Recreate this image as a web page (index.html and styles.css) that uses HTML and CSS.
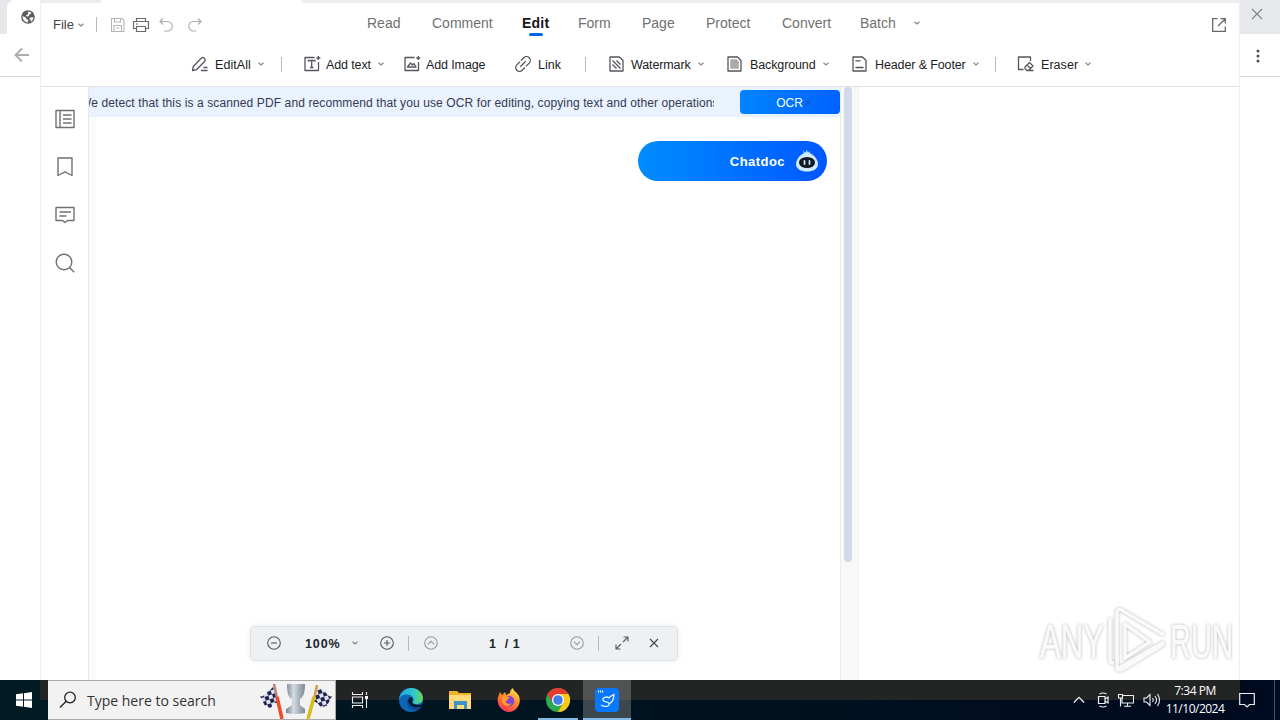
FILE: index.html
```
<!DOCTYPE html>
<html lang="en">
<head>
  <meta charset="UTF-8" />
  <title>PDF Editor</title>
  <link rel="stylesheet" href="styles.css">
</head>
<body>

  <!-- shared symbols -->
  <svg class="defs">
    <symbol id="chev" viewBox="0 0 8 8"><path d="M1.500 2.800 4 5l2.500-2.200" /></symbol>
  </svg>

  <div class="screen">
    <!-- browser window behind, left edge -->
    <div class="behind left">
      <div class="tab-strip">
        <div class="tab">
          <svg width="14" height="14" viewBox="0 0 14 14"><circle cx="7" cy="7" r="6.800" fill="#5b5c5f" /><path d="M1.500 6l3 1.200 1 1.800 1.800.8-.4 2.600C4 12.500 1.300 9.800 1.500 6zM7 1.600l3 .6.2 1.600-2 .6-.4 1.800-2.200.4-.6-1.400 2-1zM9 7.500l3.400-.3c0 2-1 3.700-2.500 4.500L9.500 9.500 8.400 9z" fill="#f4f4f5" /></svg>
        </div>
      </div>
      <div class="nav">
        <svg width="16" height="16" viewBox="0 0 16 16" class="ln"><path d="M15 8H2M8 1.500 1.500 8 8 14.500" stroke="#adadad" stroke-width="1.900" /></svg>
      </div>
    </div>

    <div class="app">
      <div class="top-edge"></div>

      <div class="menu">
        <span class="file">File</span>
        <svg class="chev"><use href="#chev" /></svg>
        <i class="sep"></i>
        <div class="quick">
          <svg width="16" height="16" viewBox="0 0 16 16" class="ln" stroke="#b5b5b5"><path d="M1.500 1.500h10.500l2 2v11h-12.500zM4.500 1.500v3.500h6V1.500M4 14.500V8.500h7.500v6M6 11h3.500" /></svg>
          <svg width="18" height="16" viewBox="0 0 18 16" class="ln" stroke="#6a6b70"><path d="M4.500 4.500v-3h9v3M4.500 11.500h-3v-7h15v7h-3M4.500 9.500h9v5h-9zM4 7h2" stroke-width="1.200" /></svg>
          <svg width="16" height="16" viewBox="0 0 16 16" class="ln" stroke="#aaa"><path d="M5 1.500 2 4.500l3 3M2 4.500h7.500a4.700 4.700 0 0 1 0 9.500H6" /></svg>
          <svg width="16" height="16" viewBox="0 0 16 16" class="ln" stroke="#aaa"><path d="M11 1.500l3 3-3 3M14 4.500H6.500a4.700 4.700 0 0 0 0 9.500H9" /></svg>
        </div>
        <div class="menu-tabs">
          <span>Read</span>
          <span>Comment</span>
          <span class="active">Edit</span>
          <span>Form</span>
          <span>Page</span>
          <span>Protect</span>
          <span>Convert</span>
          <span>Batch</span>
          <svg class="chev"><use href="#chev" /></svg>
        </div>
        <svg width="14" height="14" viewBox="0 0 14 14" class="ln share" stroke="#66676b"><path d="M5.500 .7H.7v12.600h12.600V8.500M8.500 .7h4.800v4.800M13 1 6 8" stroke-width="1.300" /></svg>
      </div>

      <div class="ribbon">
        <div class="tool">
          <svg class="ic" viewBox="0 0 18 18"><path d="M1.500 15.500l.8-4L10.500 3a1.800 1.800 0 0 1 2.600 0l.6.7a1.800 1.800 0 0 1 0 2.500L5.500 14.700zM10 15.500h6.500M12.500 12.500h4" /></svg>
          <span class="label">EditAll</span><svg class="chev"><use href="#chev" /></svg>
        </div>
        <i class="sep"></i>
        <div class="tool">
          <svg class="ic" viewBox="0 0 18 18"><path d="M11.500 2.500H2v13h13.500V7M5.500 6.700V5.500h6.500v1.200M8.700 5.500v7M7 12.500h3.500M15.300 1v4M13.300 3h4" /></svg>
          <span class="label">Add text</span><svg class="chev"><use href="#chev" /></svg>
        </div>
        <div class="tool">
          <svg class="ic" viewBox="0 0 18 18"><path d="M11.500 2.500H2v13h13.500V7M4.500 12l3-4 2 2 1.500-1.500 2 3.500zM15.300 1v4M13.300 3h4" /></svg>
          <span class="label">Add Image</span>
        </div>
        <div class="tool link">
          <svg class="ic" viewBox="0 0 18 18"><path d="M7 5.500l2.800-2.800a3.800 3.800 0 0 1 5.400 5.400L12 11.200M11 12.500l-2.800 2.800a3.800 3.800 0 0 1-5.400-5.400L6 6.800M6.300 11.700l5.400-5.400" /></svg>
          <span class="label">Link</span>
        </div>
        <i class="sep"></i>
        <div class="tool">
          <svg class="ic" viewBox="0 0 18 18"><path d="M2 2h9.500L15 5.500V16H2zM4.500 5.500l8 8M4.500 9.500l4 4M8.500 5.500l4 4" /></svg>
          <span class="label">Watermark</span><svg class="chev"><use href="#chev" /></svg>
        </div>
        <div class="tool page-bg">
          <svg class="ic" viewBox="0 0 18 18"><path d="M2 2h9.500L15 5.500V16H2z" /><path d="M4.300 4.300h6.300l2.200 2.200v7.300H4.300z" fill="#aaa" stroke="none" /></svg>
          <span class="label">Background</span><svg class="chev"><use href="#chev" /></svg>
        </div>
        <div class="tool page-bg">
          <svg class="ic" viewBox="0 0 18 18"><path d="M2 2h9.500L15 5.500V16H2zM4.500 5.800h5M4.500 12.500h8" /></svg>
          <span class="label">Header &amp; Footer</span><svg class="chev"><use href="#chev" /></svg>
        </div>
        <i class="sep"></i>
        <div class="tool">
          <svg class="ic" viewBox="0 0 18 18"><path d="M6.500 14.500H1.500V2h12v4M8 12l4.500-4.500 3.500 3.500-4.500 4.500H10l-2-2zM10 10l3.500 3.500M12 15.500h4.500" /></svg>
          <span class="label eraser">Eraser</span><svg class="chev"><use href="#chev" /></svg>
        </div>
      </div>

      <div class="work">
        <div class="side">
          <svg width="20" height="20" viewBox="0 0 20 20" class="ln"><path d="M1 1.500h18v17H1zM5 1.500v17M8 6h8.500M8 10h8.500M8 14h8.500" /></svg>
          <svg width="20" height="20" viewBox="0 0 20 20" class="ln"><path d="M3 1h14v17.500l-7-3.700-7 3.700z" /></svg>
          <svg width="20" height="20" viewBox="0 0 20 20" class="ln"><path d="M1 2.500h18v13h-6.500L10 17.500l-2.500-2H1zM4.500 7h11.500M4.500 11h7" /></svg>
          <svg width="20" height="20" viewBox="0 0 20 20" class="ln"><circle cx="9" cy="9" r="7.800" /><path d="M14.500 14.500l4.700 4.700" /></svg>
        </div>

        <div class="doc">
          <div class="banner">
            <p>We detect that this is a scanned PDF and recommend that you use OCR for editing, copying text and other operations</p>
            <button class="ocr">OCR<span>×</span></button>
          </div>
          <div class="paper">
            <button class="chatdoc">
              Chatdoc
              <svg width="24" height="24" viewBox="0 0 24 24"><path d="M9 5 8 1.500l2.500 2L12 .5l1 3 2-1.500-.5 3.500z" fill="#8dccff" /><path d="M12 3.500c5 0 11 6 11 11.500 0 5-5 7.500-11 7.500S1 20 1 15C1 9.500 7 3.500 12 3.500z" fill="#cfe9ff" /><ellipse cx="12" cy="13.500" rx="8" ry="5.500" fill="#15191f" /><path d="M9.500 12v3M14.500 12v3" stroke="#bfe6ff" stroke-width="1.800" stroke-linecap="round" /></svg>
            </button>
          </div>
        </div>

        <div class="scroll"><div class="thumb"></div></div>
        <div class="panel"></div>

        <!-- zoom / page bar floats over the document -->
        <div class="float-bar">
          <svg width="14" height="14" viewBox="0 0 14 14" class="ln"><circle cx="7" cy="7" r="6.300" /><path d="M4 7h6" /></svg>
          <strong class="zoom">100%</strong>
          <svg class="chev"><use href="#chev" /></svg>
          <svg width="14" height="14" viewBox="0 0 14 14" class="ln"><circle cx="7" cy="7" r="6.300" /><path d="M4 7h6M7 4v6" /></svg>
          <i class="sep"></i>
          <svg width="14" height="14" viewBox="0 0 14 14" class="ln dim"><circle cx="7" cy="7" r="6.300" /><path d="M4 8.300l3-3 3 3" /></svg>
          <strong class="page-no">1&nbsp; / 1</strong>
          <svg width="14" height="14" viewBox="0 0 14 14" class="ln dim"><circle cx="7" cy="7" r="6.300" /><path d="M4 5.700l3 3 3-3" /></svg>
          <i class="sep"></i>
          <svg width="14" height="14" viewBox="0 0 14 14" class="ln"><path d="M8.500 1H13v4.500M13 1 8 6M1 8.500V13h4.500M1 13l5-5" /></svg>
          <svg width="10" height="10" viewBox="0 0 10 10" class="ln"><path d="M1 1l8 8M9 1 1 9" stroke="#444" /></svg>
        </div>
      </div>
    </div>

    <!-- browser window behind, right edge -->
    <div class="behind right">
      <div class="tab-strip">
        <svg width="12" height="12" viewBox="0 0 12 12" class="ln"><path d="M1 1l10 10M11 1 1 11" stroke="#7f8285" /></svg>
      </div>
      <div class="nav">
        <svg width="4" height="14" viewBox="0 0 4 14"><g fill="#4c4d50"><circle cx="2" cy="2" r="1.500" /><circle cx="2" cy="7" r="1.500" /><circle cx="2" cy="12" r="1.500" /></g></svg>
      </div>
    </div>

    <div class="mark">
      <svg width="204" height="72" viewBox="0 0 204 72">
        <text x="6" y="54" textLength="64" lengthAdjust="spacingAndGlyphs">ANY</text>
        <g class="play"><path d="M83 7v58l47-27" /><path d="M76 14v42q0 3 4 3M91 20v34l25-16zM83 7q2-3 6 0l41 24M83 65q2 2 6 0l41-25" /></g>
        <text x="136" y="54" textLength="63" lengthAdjust="spacingAndGlyphs">RUN</text>
      </svg>
    </div>
  </div>

  <div class="taskbar">
    <div class="start">
      <svg width="16" height="16" viewBox="0 0 16 16"><path d="M0 2.300 7 1.300v6.200H0zM8 1.200 16 0v7.500H8zM0 8.500h7v6.200l-7-1zM8 8.500h8V16l-8-1.200z" fill="#fff" /></svg>
    </div>
    <div class="search">
      <svg width="18" height="18" viewBox="0 0 18 18" class="ln"><circle cx="11" cy="6.500" r="5.300" stroke="#222" stroke-width="1.300" /><path d="M7.200 10.300 1 16.500" stroke="#222" stroke-width="1.400" /></svg>
      <span>Type here to search</span>
      <svg class="trophy" width="74" height="37" viewBox="0 0 74 37">
        <defs>
          <linearGradient id="cup"><stop offset="0" stop-color="#778593" /><stop offset=".4" stop-color="#d5dce2" /><stop offset="1" stop-color="#7a8794" /></linearGradient>
          <pattern id="check" width="8" height="8" patternUnits="userSpaceOnUse" patternTransform="rotate(-20)"><path d="M0 0h8v8H0z" fill="#dfe2f0" /><path d="M0 0h4v4H0zM4 4h4v4H4z" fill="#20244f" /></pattern>
        </defs>
        <path d="M1 14c4 2 5-4 9-5l4-4 6 16c-4-1-6 1-8 5-4 0-3-3-6-2z" fill="url(#check)" />
        <path d="M73 14c-4 2-5-4-9-5l-4-4-7 15c4-1 7 2 9 6 4 0 3-3 6-2z" fill="url(#check)" />
        <path d="M15 2l3 14" stroke="#b98279" stroke-width="2.500" />
        <path d="M18 15l5 22" stroke="#f04b24" stroke-width="3.500" />
        <path d="M58 3l-3 14" stroke="#d79b43" stroke-width="2.500" />
        <path d="M55 15l-6 22" stroke="#d3be17" stroke-width="3.500" />
        <path d="M28 2h18c0 10-2 13-5 15v6l5 4v4q-9 2-19 0v-4l6-4v-6c-3-1-5-5-5-15z" fill="url(#cup)" />
      </svg>
    </div>

    <div class="pinned">
      <div class="pin">
        <svg width="18" height="16" viewBox="0 0 18 16" class="ln" stroke="#eee"><path d="M1.500 0v2.500h10V0M1.500 16v-2.500h10V16M1.500 5h10v6h-10zM15.500 0v3M15.500 7v9" /><path d="M14 4h3v3h-3z" fill="#fff" stroke="none" /></svg>
      </div>
      <div class="pin">
        <svg width="26" height="26" viewBox="0 0 26 26">
          <defs><linearGradient id="edge" x1="0" x2="1"><stop offset="0" stop-color="#1e9fe6" /><stop offset=".6" stop-color="#31c7d0" /><stop offset="1" stop-color="#66d850" /></linearGradient></defs>
          <circle cx="13" cy="13" r="12" fill="#0d66b5" />
          <path d="M1 12C2 5 7 1 13 1c7 0 12 5 12 10 0 4-3 6-7 6-3 0-4-1-3-2 3-5-4-9-9-7-3 1-4 2-5 4z" fill="url(#edge)" />
          <path d="M10 12c-3 5 1 12 8 11 3-.5 5-2 6-4-5 3-12 1-11-5l1-3z" fill="#0a4b94" />
          <path d="M14 15c1-2 1-4-1-5-3 1-3 4-2 6 2 4 8 6 13 3l1-2c-5 2-10 1-11-2z" fill="#06172c" />
        </svg>
      </div>
      <div class="pin">
        <svg width="22" height="20" viewBox="0 0 22 20"><path d="M0 1h8l2 2h12v16H0z" fill="#f0b429" /><path d="M0 5h22v14H0z" fill="#ffdc79" /><path d="M5 11h13v8h-3v-4H8v4H5z" fill="#3d93cb" /></svg>
      </div>
      <div class="pin">
        <svg width="24" height="24" viewBox="0 0 24 24">
          <defs><linearGradient id="fox" x1=".7" y1="0" x2=".2" y2="1"><stop offset="0" stop-color="#ffe14a" /><stop offset=".5" stop-color="#ff7c2b" /><stop offset="1" stop-color="#f42a62" /></linearGradient></defs>
          <path d="M3 4l2 3 3-3 1 3 4-2c0-2 1-4 3-5 0 3 4 4 6 8 3 8-3 16-10 16S-1 17 1 9z" fill="url(#fox)" />
          <circle cx="12" cy="13" r="5.300" fill="#8442d8" />
          <path d="M5 9c3-1 6-1 8 1-3 0-2 3-4 3-1 2 3 4 6 2-2 4-8 4-10-1z" fill="#ff9a22" />
        </svg>
      </div>
      <div class="pin running">
        <svg width="24" height="24" viewBox="0 0 24 24"><circle cx="12" cy="12" r="12" fill="#2da94f" /><path d="M1.600 6A12 12 0 0 1 22.400 6H12l-5.200 9z" fill="#e63b2e" /><path d="M22.400 6A12 12 0 0 1 12 24l5.200-9L12 6z" fill="#fdc816" /><circle cx="12" cy="12" r="6" fill="#fff" /><circle cx="12" cy="12" r="4.800" fill="#3f7ee8" /></svg>
      </div>
      <div class="pin current">
        <svg width="24" height="24" viewBox="0 0 24 24" class="ln"><rect width="24" height="24" rx="4" fill="#0878ff" /><path d="M6 17c4 2.500 9 1.500 8-1.500-.8-2-5-1-6-3.500-.8-2.500 4-4 6-2 1-2 3-2.500 5-3.500 0 5-1.500 7.500-5 9.500" stroke="#e5f3ff" stroke-width="1.300" /><path d="M3.500 2.500v2M5.500 2.500v2M7.500 2.500v2" stroke="#fff" /></svg>
      </div>
    </div>

    <div class="tray">
      <svg width="12" height="8" viewBox="0 0 12 8" class="ln"><path d="M.8 6.500 6 1.300l5.200 5.200" stroke-width="1.300" /></svg>
      <svg width="12" height="16" viewBox="0 0 12 16" class="ln"><path d="M1.500 4.500h6.500v7H1.500zM8 7l3-2v6L8 9M2.500 2q3.500-2 7 0M2.500 14q3.500 2 7 0" stroke-width="1.200" /></svg>
      <svg width="16" height="14" viewBox="0 0 16 14" class="ln"><path d="M5 2.500h10.500v7.500H4V5M.5 1.500h4v3.500h-4zM2.500 5v8.500M9.500 10v3M6 13.300h7" /></svg>
      <svg width="18" height="14" viewBox="0 0 18 14" class="ln"><path d="M1 5v4h2.500L7 12.500v-11L3.500 5zM9.500 5q1.500 2 0 4M12 3q3 4 0 8M14.500 1q4 6 0 12" /></svg>
      <div class="clock"><span>7:34 PM</span><span>11/10/2024</span></div>
      <svg width="16" height="16" viewBox="0 0 16 16" class="ln notes"><path d="M.7 1.500h14.600v11H10.500L8 15l-2.500-2.500H.7z" stroke-width="1.200" /></svg>
      <i class="peek"></i>
    </div>
  </div>

</body>
</html>
```
FILE: styles.css
```
* {
  box-sizing: border-box;
}

body {
  margin: 0;
  width: 1280px;
  height: 720px;
  overflow: hidden;
  font-family: "Liberation Sans", Arial, sans-serif;
  background: #fff;
}

svg {
  display: block;
  flex: none;
}

.defs {
  position: absolute;
  width: 0;
  height: 0;
}

.ln {
  fill: none;
  stroke-width: 1.1;
}

button {
  border: none;
  padding: 0;
  font-family: inherit;
  color: #fff;
}

.screen {
  position: relative;
  display: grid;
  grid-template-columns: 40px 1200px 40px;
  height: 680px;
}

/* browser behind the app */
.behind .tab-strip {
  height: 34px;
  background: #e6e8eb;
}

.behind .nav {
  height: 43px;
  border-bottom: 1px solid #d5d7d9;
}

.left .tab-strip {
  padding-left: 7px;
}

.left .tab {
  height: 34px;
  padding: 10px 0 0 14px;
  background: #fff;
  border-radius: 8px 0 0 0;
}

.left .nav {
  padding: 13px 0 0 14px;
}

.right .tab-strip {
  padding: 8px 0 0 11px;
}

.right .nav {
  padding: 15px 0 0 16px;
}

/* app window */
.app {
  display: flex;
  flex-direction: column;
  background: #fff;
  border-left: 1px solid #eee;
  border-right: 1px solid #eee;
}

.top-edge {
  height: 3px;
  background: linear-gradient(#fff, #fff) 60px 0 / 201px 3px no-repeat #ededee;
}

.menu {
  display: flex;
  align-items: center;
  height: 43px;
  padding-left: 12px;
  color: #444;
}

.file {
  width: 24px;
  font-size: 13px;
}

.chev {
  width: 8px;
  height: 8px;
  fill: none;
  stroke: #888;
  stroke-width: 1.2;
}

.sep {
  flex: none;
  width: 1px;
  height: 15px;
  background: #b9b9b9;
}

.menu .sep {
  margin: 0 13px 0 11px;
}

.quick {
  display: flex;
  align-items: center;
  width: 257px;
  gap: 8px;
}

.quick svg:nth-child(2) {
  margin-left: -2px;
}

.quick svg:nth-child(4) {
  margin-left: 5px;
}

.menu-tabs {
  display: grid;
  grid-template-columns: 65px 90px 56px 64px 64px 76px 78px 53px 8px;
  align-items: center;
  height: 40px;
  padding-bottom: 3px;
  font-size: 14px;
  color: #707070;
}

.active {
  position: relative;
  width: 28px;
  font-weight: bold;
  letter-spacing: .2px;
  color: #17181c;
}

.active::after {
  content: "";
  position: absolute;
  left: 7px;
  bottom: -5px;
  width: 14px;
  height: 3px;
  border-radius: 2px;
  background: #0066f0;
}

.share {
  margin: 0 13px 0 auto;
}

.ribbon {
  display: grid;
  grid-template-columns: 90px 22px 100px 111px 71px 23px 118px 125px 144px 22px 80px;
  align-items: center;
  height: 41px;
  padding: 0 0 4px 150px;
  border-bottom: 1px solid #dfe1e4;
}

.tool {
  display: flex;
  align-items: center;
  font-size: 12.5px;
  letter-spacing: -.12px;
  color: #1c1d24;
  white-space: nowrap;
}

.label {
  padding-top: 1px;
}

.tool:first-child,
.link,
.eraser {
  letter-spacing: .05px;
}

.tool:first-child .ic,
.link .ic,
.page-bg .ic {
  margin-right: 6px;
}

.eraser {
  margin-left: 1px;
}

.ic {
  width: 18px;
  height: 18px;
  margin-right: 5px;
  fill: none;
  stroke: #55565b;
  stroke-width: 1.3;
  stroke-linejoin: round;
}

.tool .chev {
  margin-left: 6px;
}

/* work area */
.work {
  position: relative;
  flex: 1;
  display: flex;
}

.side {
  display: flex;
  flex-direction: column;
  align-items: center;
  gap: 28px;
  width: 48px;
  padding-top: 22px;
  border-right: 1px solid #e6e7e9;
}

.side svg {
  stroke: #707175;
  stroke-width: 1.4;
  stroke-linejoin: round;
}

.doc {
  display: flex;
  flex-direction: column;
  width: 751px;
}

.banner {
  display: flex;
  align-items: center;
  justify-content: space-between;
  height: 30px;
  background: #eaf1ff;
}

.banner p {
  width: 625px;
  margin: 0;
  padding-top: 1px;
  overflow: hidden;
  white-space: nowrap;
  text-indent: -9px;
  font-size: 12px;
  line-height: 18px;
  letter-spacing: .11px;
  color: #343a50;
}

.ocr {
  width: 100px;
  height: 24px;
  padding: 1px 0 0 8px;
  border-radius: 4px;
  background: linear-gradient(90deg, #0084ff, #0062ff);
  font-size: 12px;
}

.ocr span {
  margin-left: 2px;
  color: #1d50c4;
}

.paper {
  flex: 1;
  padding: 24px 13px 0 0;
  border-left: 7px solid #fcfcfc;
}

.chatdoc {
  display: flex;
  align-items: center;
  justify-content: flex-end;
  gap: 10px;
  width: 189px;
  height: 40px;
  margin-left: auto;
  padding-right: 8px;
  border-radius: 20px;
  background: linear-gradient(90deg, #008cff, #0058ff);
  font-size: 13px;
  font-weight: bold;
  letter-spacing: .45px;
}

.scroll {
  width: 19px;
  padding-left: 3px;
  background: #f8f8f9;
  border-left: 1px solid #ececee;
  border-right: 1px solid #f1f1f2;
}

.thumb {
  width: 8px;
  height: 475px;
  border-radius: 4px;
  background: #d2d9e8;
}

.panel {
  flex: 1;
}

.float-bar {
  position: absolute;
  left: 209px;
  top: 539px;
  display: grid;
  grid-template-columns: 38px 46px 29px 28px 16px 65px 81px 28px 17px 34px 10px;
  align-items: center;
  width: 428px;
  height: 35px;
  padding: 0 0 1px 16px;
  border: 1px solid #dfe3e6;
  border-radius: 5px;
  background: #eef1f4;
  box-shadow: 0 0 6px rgba(0, 0, 0, 0.08);
}

.float-bar .ln {
  stroke: #55585e;
}

.float-bar .dim {
  stroke: #96999e;
}

.float-bar strong {
  padding-top: 1px;
  font-size: 12.5px;
  color: #20232b;
}

.zoom {
  letter-spacing: .9px;
}

.page-no {
  letter-spacing: .6px;
}

/* translucent logo in the corner */
.mark {
  position: absolute;
  left: 1034px;
  top: 604px;
}

.mark svg {
  filter: drop-shadow(0 0 1.5px rgba(0, 0, 0, 0.3));
  overflow: visible;
}

.mark text {
  font-family: "Liberation Sans Narrow", "Liberation Sans", sans-serif;
  font-size: 49px;
  fill: #fafafa;
  stroke: #fafafa;
  stroke-width: .7;
}

.play {
  fill: none;
  stroke: #fafafa;
  stroke-width: 3.5;
  stroke-linejoin: round;
}

/* taskbar */
.taskbar {
  display: flex;
  height: 40px;
  color: #fff;
  background:
    linear-gradient(#232424, #232424) 40px 0 / 1200px 20px no-repeat,
    linear-gradient(90deg, #001a24, #00111f 60%, #000a20);
}

.start {
  width: 48px;
  padding: 12px 0 0 16px;
}

.search {
  display: flex;
  align-items: center;
  width: 288px;
  padding-left: 11px;
  border: 1px solid #aaa;
  border-width: 1px 1px 1px 0;
  background: #f2f2f2;
  font-family: "Open Sans", sans-serif;
  font-size: 14px;
  color: #333;
}

.search span {
  width: 172px;
  margin-left: 10px;
}

.pinned {
  display: flex;
  gap: 1px;
  padding-left: 2px;
}

.pin {
  display: flex;
  align-items: center;
  justify-content: center;
  width: 48px;
  height: 40px;
}

.pin:first-child svg {
  margin-left: -4px;
}

.running {
  background: linear-gradient(#83b9e9, #83b9e9) center bottom / 40px 2px no-repeat;
}

.current {
  border-bottom: 2px solid #83b9e9;
  background: linear-gradient(#515252 20px, #3d474e 20px);
}

.current svg {
  margin-top: 1px;
}

.tray {
  display: flex;
  align-items: center;
  gap: 9px;
  margin-left: auto;
  width: 207px;
}

.tray .ln {
  stroke: #eee;
}

.tray .ln:nth-child(2) {
  margin-left: 3px;
}

.clock {
  display: flex;
  flex-direction: column;
  align-items: center;
  width: 60px;
  margin-left: -5px;
  font-family: "Open Sans", sans-serif;
  font-size: 12px;
  line-height: 18px;
  letter-spacing: -.45px;
}

.clock span:last-child {
  letter-spacing: -.5px;
}

.tray .notes {
  margin-left: 5px;
}

.peek {
  width: 1px;
  height: 40px;
  margin-left: 10px;
  background: #4a5263;
}
```
